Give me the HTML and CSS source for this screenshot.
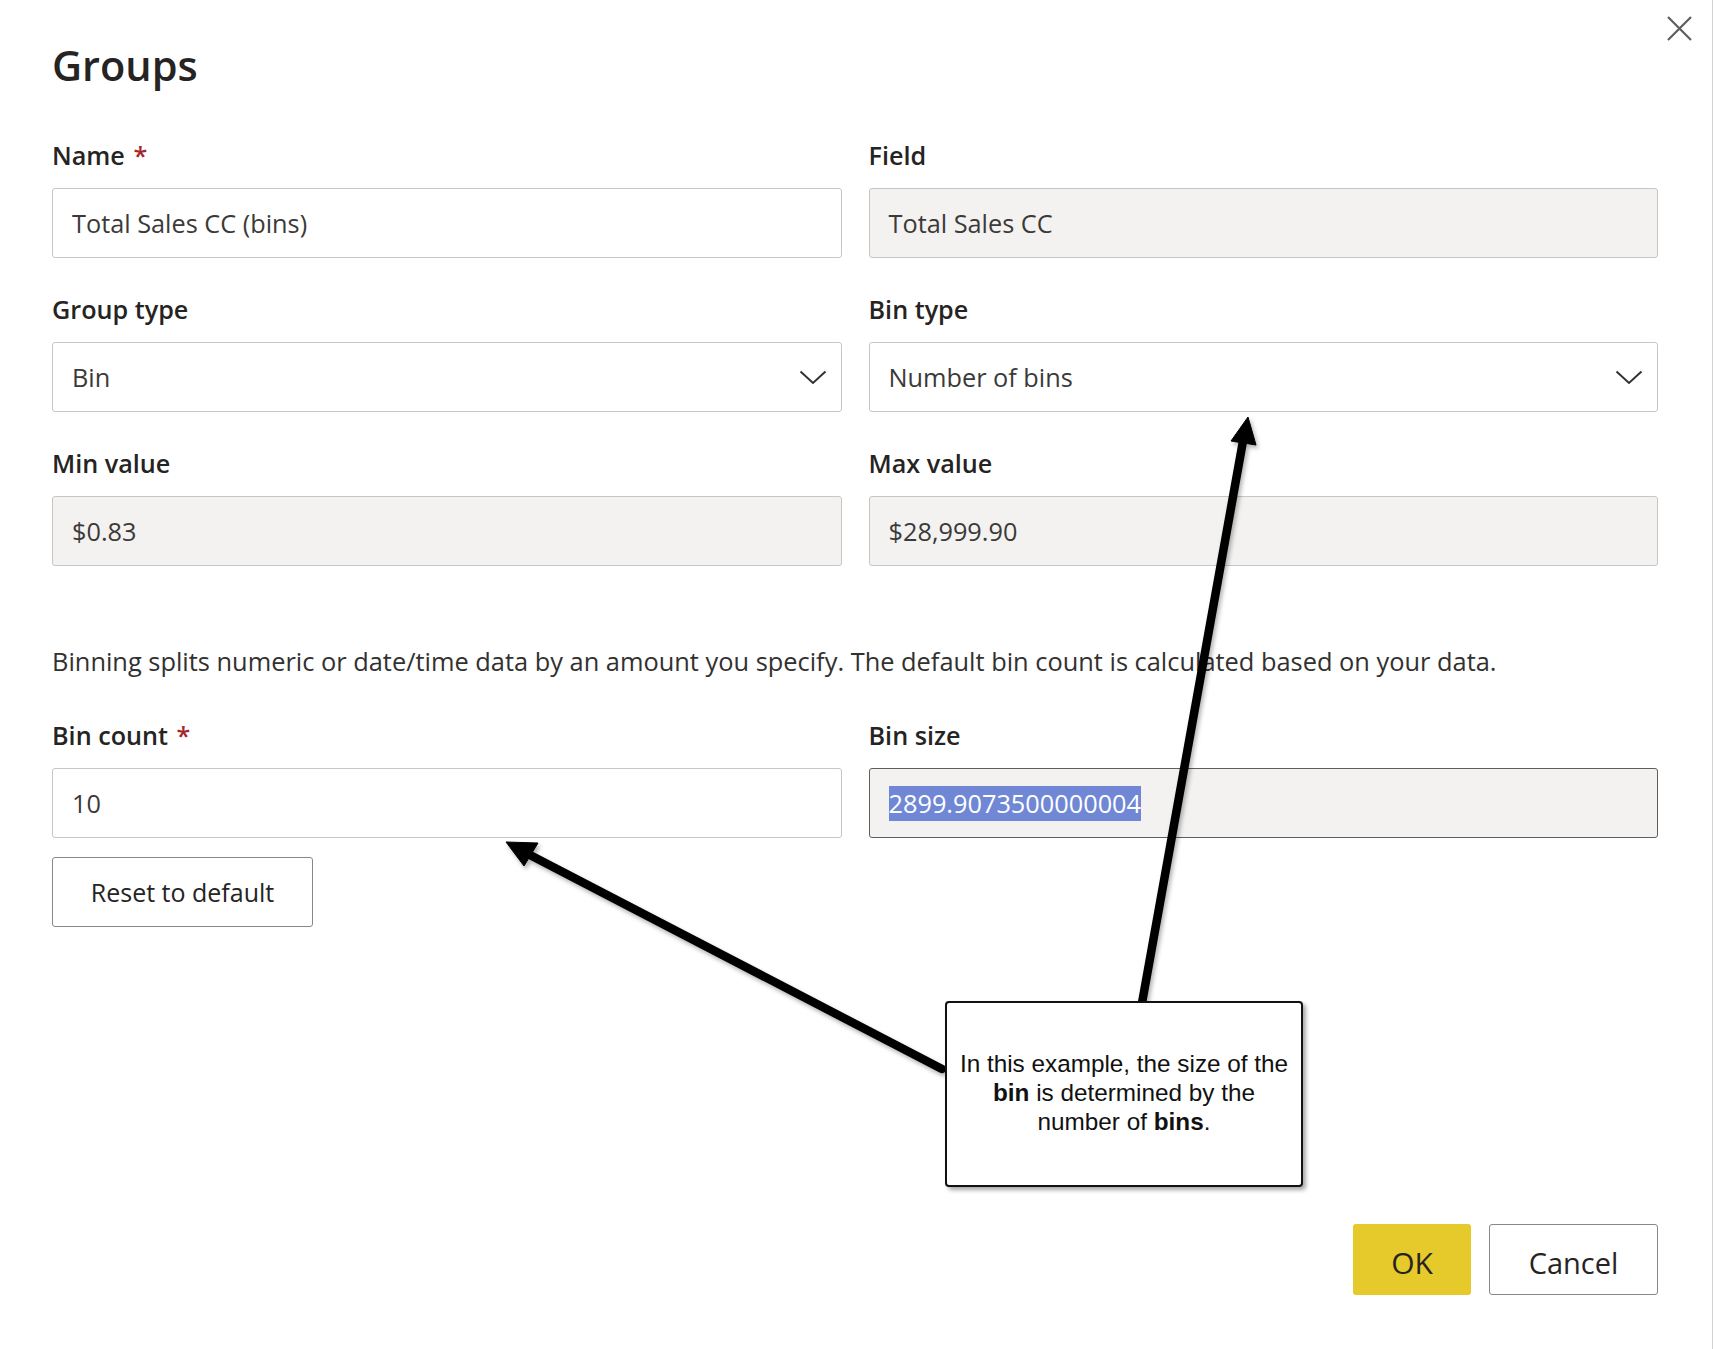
FILE: index.html
```html
<!DOCTYPE html>
<html lang="en">
<head>
<meta charset="utf-8">
<title>Groups</title>
<link rel="stylesheet" href="styles.css">
</head>
<body>
<div class="dialog">
  <button class="close" aria-label="Close">
    <svg width="25" height="25" viewBox="0 0 25 25"><path d="M1 1 L24 24 M24 1 L1 24" stroke="#605e5c" stroke-width="2.2" fill="none"/></svg>
  </button>
  <h1 class="title">Groups</h1>

  <div class="grid">
    <div class="field">
      <label class="label">Name <span class="req">*</span></label>
      <div class="input">Total Sales CC (bins)</div>
    </div>
    <div class="field">
      <label class="label">Field</label>
      <div class="input readonly">Total Sales CC</div>
    </div>
    <div class="field">
      <label class="label">Group type</label>
      <div class="input">Bin<svg class="chev" width="28" height="15" viewBox="0 0 28 15"><path d="M1.5 1.5 L14 13 L26.5 1.5" stroke="#323130" stroke-width="2" fill="none"/></svg></div>
    </div>
    <div class="field">
      <label class="label">Bin type</label>
      <div class="input">Number of bins<svg class="chev" width="28" height="15" viewBox="0 0 28 15"><path d="M1.5 1.5 L14 13 L26.5 1.5" stroke="#323130" stroke-width="2" fill="none"/></svg></div>
    </div>
    <div class="field">
      <label class="label">Min value</label>
      <div class="input readonly">$0.83</div>
    </div>
    <div class="field">
      <label class="label">Max value</label>
      <div class="input readonly">$28,999.90</div>
    </div>
  </div>

  <p class="desc">Binning splits numeric or date/time data by an amount you specify. The default bin count is calculated based on your data.</p>

  <div class="grid">
    <div class="field">
      <label class="label">Bin count <span class="req">*</span></label>
      <div class="input">10</div>
    </div>
    <div class="field">
      <label class="label">Bin size</label>
      <div class="input readonly focused"><span class="sel">2899.9073500000004</span></div>
    </div>
  </div>

  <div class="reset-row">
    <button class="btn reset">Reset to default</button>
  </div>

  <div class="footer">
    <button class="btn ok">OK</button>
    <button class="btn cancel">Cancel</button>
  </div>

  <svg class="arrows" width="1713" height="1349" viewBox="0 0 1713 1349">
    <g fill="#000" stroke="#000">
      <line x1="530" y1="855" x2="942" y2="1069" stroke-width="8.5" stroke-linecap="round"/>
      <polygon points="506,842 538,843 524,866" stroke-width="1" stroke-linejoin="round"/>
      <line x1="1243" y1="441" x2="1142" y2="1003" stroke-width="8.5" stroke-linecap="round"/>
      <polygon points="1248,417 1256,445 1231,441" stroke-width="1" stroke-linejoin="round"/>
    </g>
  </svg>

  <div class="callout">
    <p>In this example, the size of the<br><b>bin</b> is determined by the<br>number of <b>bins</b>.</p>
  </div>
</div>
</body>
</html>
```

FILE: styles.css
```css
* {
  box-sizing: border-box;
}

body {
  margin: 0;
  background: #ffffff;
  font-family: "Open Sans", "Noto Sans", sans-serif;
  color: #252423;
}

.dialog {
  position: relative;
  width: 1713px;
  height: 1349px;
  border-right: 1px solid #d2d2d2;
  padding: 37px 54px 54px 52px;
  display: flex;
  flex-direction: column;
  overflow: hidden;
}

.close {
  position: absolute;
  top: 16px;
  right: 20px;
  width: 25px;
  height: 25px;
  padding: 0;
  border: none;
  background: none;
  display: block;
}

.close svg {
  display: block;
}

.title {
  margin: 0 0 47px;
  font-size: 41.5px;
  line-height: 56px;
  font-weight: 600;
  color: #252423;
}

.grid {
  display: grid;
  grid-template-columns: 1fr 1fr;
  column-gap: 27px;
  row-gap: 36px;
}

.label {
  display: block;
  font-size: 25.2px;
  line-height: 30px;
  font-weight: 600;
  margin-bottom: 18px;
  color: #252423;
}

.req {
  color: #a4262c;
  margin-left: 2px;
}

.input {
  height: 70px;
  border: 1px solid #c8c6c4;
  border-radius: 3px;
  padding: 0 14px 0 19px;
  font-size: 25.3px;
  line-height: 32px;
  color: #3b3a39;
  display: flex;
  align-items: center;
  justify-content: space-between;
  background: #ffffff;
}

.readonly {
  background: #f3f2f1;
}

.focused {
  border-color: #605e5c;
}

.chev {
  display: block;
  flex: none;
}

.sel {
  background: #7087d6;
  color: #ffffff;
  line-height: 35px;
  display: inline-block;
}

.desc {
  margin: 79px 0 43px;
  font-size: 25.4px;
  line-height: 32px;
  color: #323130;
}

.reset-row {
  margin-top: 19px;
  display: flex;
}

.btn {
  font-family: "Open Sans", "Noto Sans", sans-serif;
  color: #252423;
  background: #ffffff;
  border: 1.5px solid #8a8886;
  border-radius: 3px;
  padding: 0;
  display: flex;
  align-items: center;
  justify-content: center;
}

.reset {
  width: 261px;
  height: 70px;
  font-size: 25px;
}

.footer {
  margin-top: auto;
  display: flex;
  justify-content: flex-end;
  gap: 18px;
}

.ok {
  width: 118px;
  height: 71px;
  background: #e6c92b;
  border: none;
  font-size: 30px;
  padding-top: 5px;
}

.cancel {
  width: 169px;
  height: 71px;
  font-size: 29px;
  padding-top: 5px;
}

.arrows {
  position: absolute;
  left: 0;
  top: 0;
  pointer-events: none;
  filter: drop-shadow(2px 3px 2px rgba(0, 0, 0, 0.3));
}

.callout {
  position: absolute;
  left: 945px;
  top: 1001px;
  width: 358px;
  height: 186px;
  border: 2px solid #111111;
  border-radius: 4px;
  background: #ffffff;
  box-shadow: 3px 3px 4px rgba(0, 0, 0, 0.35);
  display: flex;
  align-items: center;
  justify-content: center;
  font-family: "Liberation Sans", Arial, sans-serif;
  font-size: 24.3px;
  line-height: 29px;
  color: #111111;
  text-align: center;
}

.callout p {
  margin: 0 0 3px;
}
```
